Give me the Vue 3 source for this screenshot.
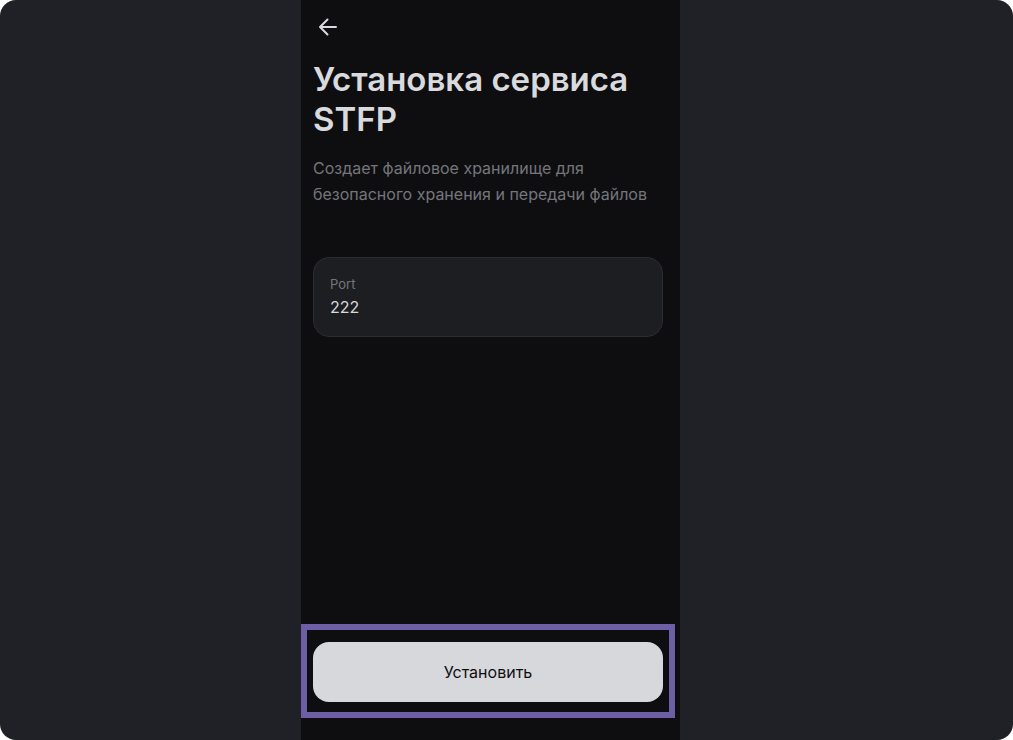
<script setup>
import { ref } from 'vue'

const port = ref('222')
</script>

<template>
  <div class="stage">
    <main class="screen">
      <button class="back" type="button" aria-label="Назад">
        <svg width="24" height="24" viewBox="0 0 24 24" fill="none" stroke="currentColor" stroke-width="2" stroke-linecap="round" stroke-linejoin="round">
          <path d="M20 12H4M11.5 4.5L4 12L11.5 19.5" />
        </svg>
      </button>
      <h1>Установка сервиса STFP</h1>
      <p>Создает файловое хранилище для безопасного хранения и передачи файлов</p>
      <div class="field">
        <label for="port">Port</label>
        <input id="port" v-model="port" type="text" inputmode="numeric" />
      </div>
      <div class="highlight">
        <button class="install" type="button">Установить</button>
      </div>
    </main>
  </div>
</template>

<style>
body {
  background: #fff;
}
</style>

<style scoped>
.stage {
  display: flex;
  justify-content: center;
  min-height: 100vh;
  padding-right: 32px;
  box-sizing: border-box;
  border-radius: 16px;
  background: #202126;
  font-family: Inter, "Liberation Sans", sans-serif;
}

.screen {
  display: flex;
  flex-direction: column;
  align-items: stretch;
  width: 379px;
  padding: 15px 17px 22px 12px;
  box-sizing: border-box;
  background: #0e0e10;
}

.back {
  align-self: flex-start;
  width: 24px;
  height: 24px;
  margin-left: 3px;
  padding: 0;
  border: 0;
  background: none;
  color: #d9dade;
}

.back svg {
  display: block;
}

h1 {
  margin: 20px 0 0;
  color: #d9dade;
  font-size: 33px;
  font-weight: 600;
  line-height: 40px;
}

p {
  margin: 16px 0 0;
  color: #75767c;
  font-size: 16px;
  line-height: 26px;
}

.field {
  display: flex;
  flex-direction: column;
  margin-top: 50px;
  padding: 16px;
  border: 1px solid #2b2c30;
  border-radius: 16px;
  background: #1d1e21;
}

.field label {
  color: #75767c;
  font-size: 13px;
  line-height: 20px;
}

.field input {
  width: 100%;
  height: 26px;
  padding: 0;
  border: 0;
  outline: 0;
  background: none;
  color: #d9dade;
  font: inherit;
  font-size: 16px;
}

.highlight {
  margin: auto -12px 0;
  padding: 12px 6px 10px;
  border: 6px solid #6e5ea6;
}

.install {
  display: block;
  width: 100%;
  height: 60px;
  border: 0;
  border-radius: 16px;
  background: #d7d8dc;
  color: #0e0e10;
  font: inherit;
  font-size: 16px;
}
</style>
